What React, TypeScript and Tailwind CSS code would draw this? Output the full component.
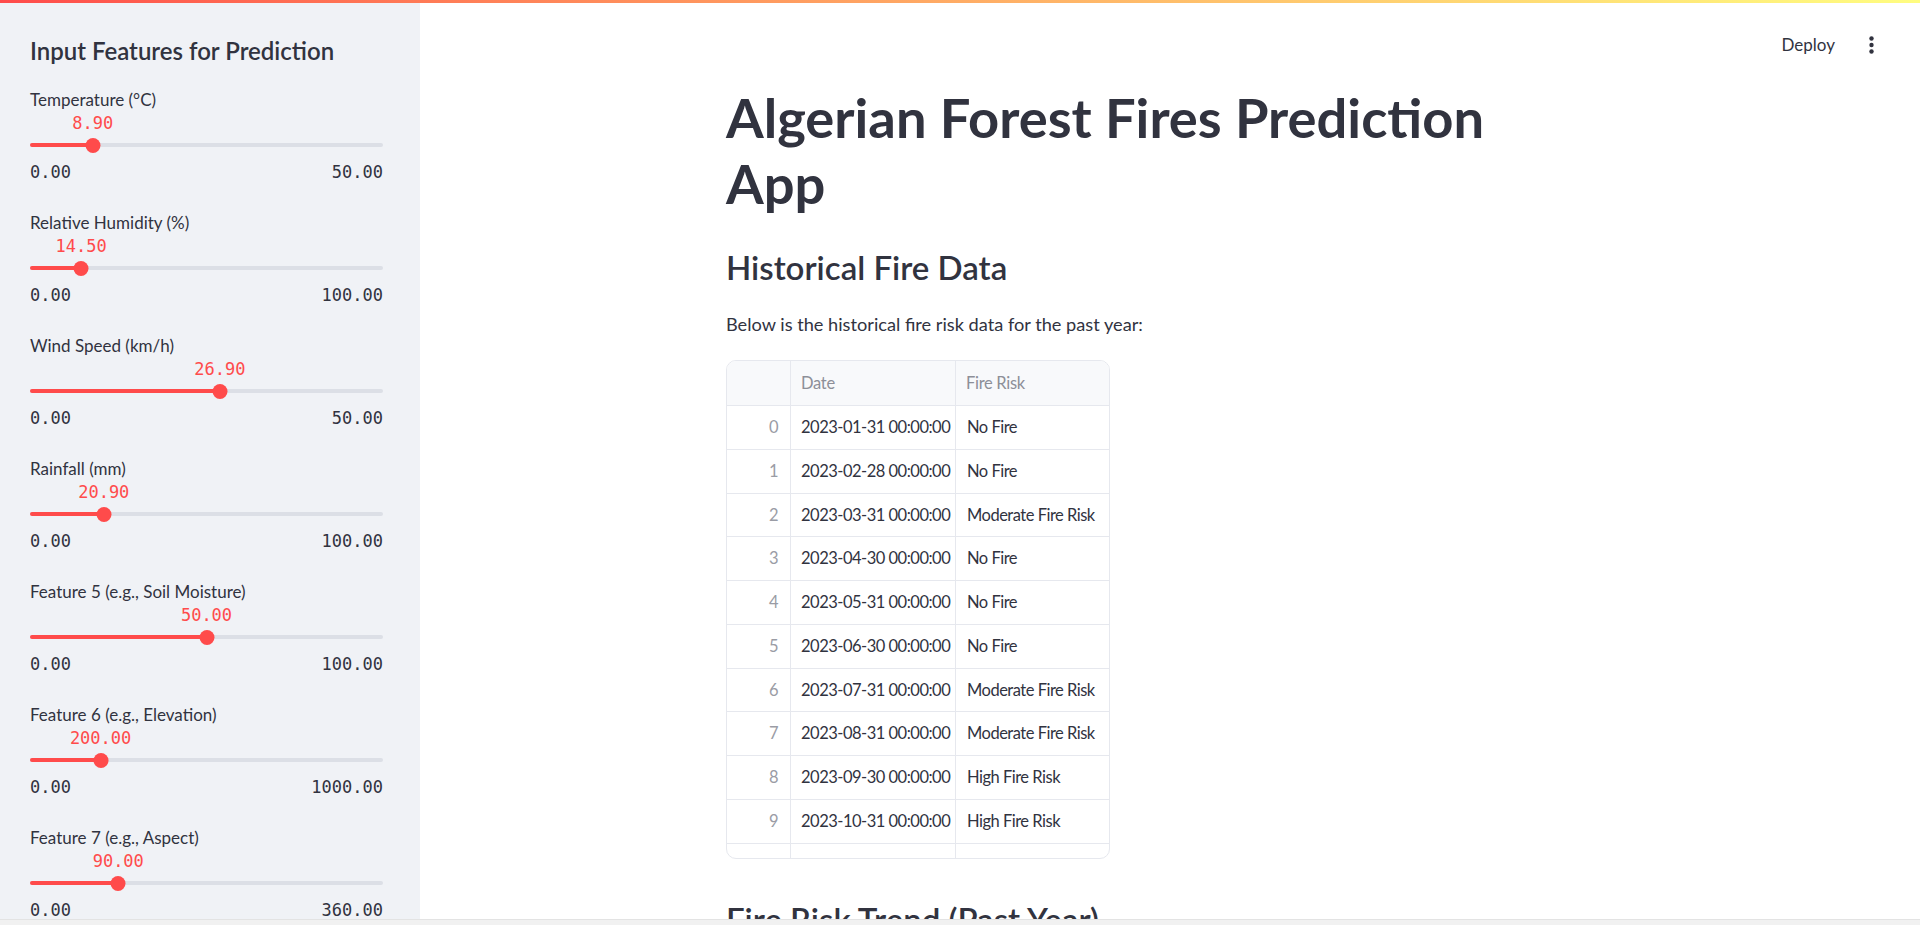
import React from "react";

const sliders = [
  { label: "Temperature (°C)", value: 8.9, min: 0, max: 50 },
  { label: "Relative Humidity (%)", value: 14.5, min: 0, max: 100 },
  { label: "Wind Speed (km/h)", value: 26.9, min: 0, max: 50 },
  { label: "Rainfall (mm)", value: 20.9, min: 0, max: 100 },
  { label: "Feature 5 (e.g., Soil Moisture)", value: 50, min: 0, max: 100 },
  { label: "Feature 6 (e.g., Elevation)", value: 200, min: 0, max: 1000 },
  { label: "Feature 7 (e.g., Aspect)", value: 90, min: 0, max: 360 },
];

const rows = [
  ["0", "2023-01-31 00:00:00", "No Fire"],
  ["1", "2023-02-28 00:00:00", "No Fire"],
  ["2", "2023-03-31 00:00:00", "Moderate Fire Risk"],
  ["3", "2023-04-30 00:00:00", "No Fire"],
  ["4", "2023-05-31 00:00:00", "No Fire"],
  ["5", "2023-06-30 00:00:00", "No Fire"],
  ["6", "2023-07-31 00:00:00", "Moderate Fire Risk"],
  ["7", "2023-08-31 00:00:00", "Moderate Fire Risk"],
  ["8", "2023-09-30 00:00:00", "High Fire Risk"],
  ["9", "2023-10-31 00:00:00", "High Fire Risk"],
  ["10", "2023-11-30 00:00:00", "Moderate Fire Risk"],
  ["11", "2023-12-31 00:00:00", "No Fire"],
];

function Slider({ label, value, min, max }: { label: string; value: number; min: number; max: number }) {
  const pct = ((value - min) / (max - min)) * 100;
  return (
    <div className="h-[123px] flex flex-col">
      <div className="h-[28px] flex items-center text-[17px] text-[#31333f]">{label}</div>
      <div className="h-[20px] relative">
        <span
          className="absolute top-0 h-[20px] flex items-center -translate-x-1/2 font-['DejaVu_Sans_Mono',monospace] text-[17px] text-[#ff4b4b] whitespace-nowrap"
          style={{ left: `${pct}%` }}
        >
          {value.toFixed(2)}
        </span>
      </div>
      <div className="h-[22px] relative flex items-center">
        <div className="h-[4px] w-full rounded-full bg-[#dcdfe6]" />
        <div className="absolute left-0 h-[4px] rounded-full bg-[#ff4b4b]" style={{ width: `${pct}%` }} />
        <div
          className="absolute w-[15px] h-[15px] rounded-full bg-[#ff4b4b] -translate-x-1/2"
          style={{ left: `${pct}%` }}
        />
      </div>
      <div className="h-[34px] flex items-center justify-between font-['DejaVu_Sans_Mono',monospace] text-[17px] text-[#31333f]">
        <span>{min.toFixed(2)}</span>
        <span>{max.toFixed(2)}</span>
      </div>
    </div>
  );
}

export default function App() {
  return (
    <div className="relative w-[1920px] h-[925px] overflow-hidden bg-white flex font-['Source_Sans_Pro','Lato',sans-serif] text-[#31333f]">
      <div className="absolute top-0 left-0 right-0 h-[3px] bg-gradient-to-r from-[#ff4b4b] to-[#fffd80] z-10" />

      <aside className="w-[420px] shrink-0 h-full bg-[#f0f2f6] pl-[30px] pr-[37px] pt-[33px] overflow-hidden">
        <div className="h-[36px] flex items-center text-[24px] font-semibold text-[#31333f] mb-[17px]">
          Input Features for Prediction
        </div>
        {sliders.map((s) => (
          <Slider key={s.label} {...s} />
        ))}
      </aside>

      <main className="flex-1 h-full flex flex-col">
        <div className="h-[84px] shrink-0 flex justify-end items-start pt-[33px] pr-[46px] gap-[34px]">
          <span className="h-[24px] flex items-center text-[17px] text-[#31333f]">Deploy</span>
          <svg width="5" height="20" viewBox="0 0 5 20" className="mt-[2px]">
            <circle cx="2.5" cy="3.5" r="2.2" fill="#31333f" />
            <circle cx="2.5" cy="10" r="2.2" fill="#31333f" />
            <circle cx="2.5" cy="16.5" r="2.2" fill="#31333f" />
          </svg>
        </div>

        <div className="ml-[306px] w-[880px] flex flex-col">
          <h1 className="text-[54.3px] font-bold leading-[66px] text-[#31333f]">
            Algerian Forest Fires Prediction
            <br />
            App
          </h1>
          <h3 className="mt-[30px] text-[33px] font-semibold leading-[42px] text-[#31333f]">Historical Fire Data</h3>
          <p className="mt-[20px] text-[18.2px] leading-[32px] text-[#31333f]">
            Below is the historical fire risk data for the past year:
          </p>

          <div className="mt-[20px] w-[384px] h-[499px] border border-[#e6e8ee] rounded-[10px] overflow-hidden shrink-0">
            <div className="grid grid-cols-[64px_165px_154px] h-[45px] bg-[#f8f9fb] border-b border-[#e6e8ee] text-[16.5px] tracking-[-0.3px] text-[#8d8f98]">
              <div className="border-r border-[#e6e8ee]" />
              <div className="border-r border-[#e6e8ee] flex items-center pl-[10px]">Date</div>
              <div className="flex items-center pl-[10px]">Fire Risk</div>
            </div>
            {rows.map((r) => (
              <div
                key={r[0]}
                className="grid grid-cols-[64px_165px_154px] h-[43.75px] border-b border-[#e6e8ee] text-[16.5px] tracking-[-0.5px] whitespace-nowrap"
              >
                <div className="border-r border-[#e6e8ee] flex items-center justify-end pr-[12px] text-[#9a9ca5]">{r[0]}</div>
                <div className="border-r border-[#e6e8ee] flex items-center pl-[10px] text-[#31333f] overflow-hidden">{r[1]}</div>
                <div className="flex items-center pl-[11px] text-[#31333f] overflow-hidden">{r[2]}</div>
              </div>
            ))}
          </div>

          <h3 className="mt-[39px] text-[33px] font-semibold leading-[42px] text-[#31333f] whitespace-nowrap">
            Fire Risk Trend (Past Year)
          </h3>
        </div>
      </main>

      <div className="absolute bottom-0 left-0 right-0 h-[6px] bg-[#f1f1f1] border-t border-[#e3e3e3] z-10" />
    </div>
  );
}
